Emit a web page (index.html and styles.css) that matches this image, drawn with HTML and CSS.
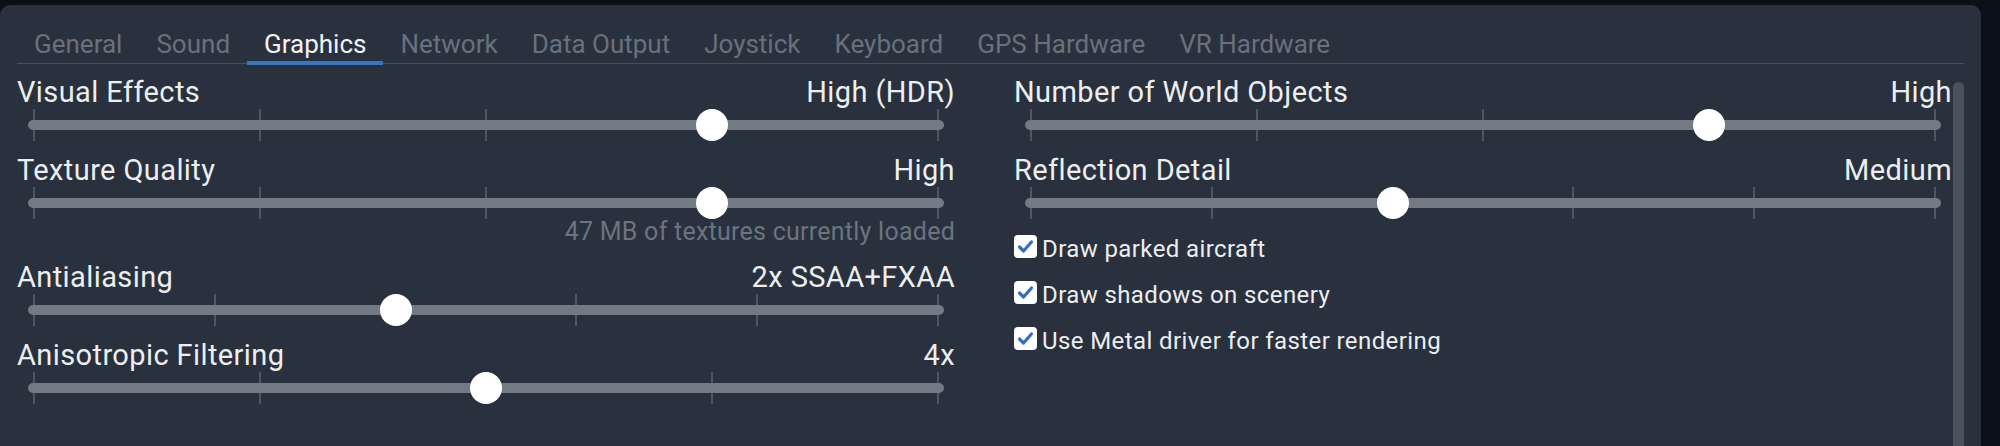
FILE: index.html
```html
<!DOCTYPE html>
<html lang="en">
<head>
<meta charset="utf-8">
<title>Settings – Graphics</title>
<link rel="stylesheet" href="styles.css">
</head>
<body>
<div class="panel">
  <nav class="tabs">
    <span class="tab">General</span>
    <span class="tab">Sound</span>
    <span class="tab active">Graphics</span>
    <span class="tab">Network</span>
    <span class="tab">Data Output</span>
    <span class="tab">Joystick</span>
    <span class="tab">Keyboard</span>
    <span class="tab">GPS Hardware</span>
    <span class="tab">VR Hardware</span>
  </nav>
  <div class="content">
    <div class="columns">
      <div class="column">
        <div class="setting">
          <div class="head"><span>Visual Effects</span><span>High (HDR)</span></div>
          <div class="slider">
            <div class="ticks"><i></i><i></i><i></i><i></i><i></i></div>
            <div class="track"></div>
            <div class="knob" style="--pos:0.75"></div>
          </div>
        </div>
        <div class="setting">
          <div class="head"><span>Texture Quality</span><span>High</span></div>
          <div class="slider">
            <div class="ticks"><i></i><i></i><i></i><i></i><i></i></div>
            <div class="track"></div>
            <div class="knob" style="--pos:0.75"></div>
          </div>
          <div class="note">47 MB of textures currently loaded</div>
        </div>
        <div class="setting">
          <div class="head"><span>Antialiasing</span><span>2x SSAA+FXAA</span></div>
          <div class="slider">
            <div class="ticks"><i></i><i></i><i></i><i></i><i></i><i></i></div>
            <div class="track"></div>
            <div class="knob" style="--pos:0.4"></div>
          </div>
        </div>
        <div class="setting">
          <div class="head"><span>Anisotropic Filtering</span><span>4x</span></div>
          <div class="slider">
            <div class="ticks"><i></i><i></i><i></i><i></i><i></i></div>
            <div class="track"></div>
            <div class="knob" style="--pos:0.5"></div>
          </div>
        </div>
      </div>
      <div class="column">
        <div class="setting">
          <div class="head"><span>Number of World Objects</span><span>High</span></div>
          <div class="slider">
            <div class="ticks"><i></i><i></i><i></i><i></i><i></i></div>
            <div class="track"></div>
            <div class="knob" style="--pos:0.75"></div>
          </div>
        </div>
        <div class="setting">
          <div class="head"><span>Reflection Detail</span><span>Medium</span></div>
          <div class="slider">
            <div class="ticks"><i></i><i></i><i></i><i></i><i></i><i></i></div>
            <div class="track"></div>
            <div class="knob" style="--pos:0.4"></div>
          </div>
        </div>
        <div class="checks">
          <label class="check">
            <span class="box"><svg viewBox="0 0 23 23" width="23" height="23"><path d="M5.5 12 L9.5 16 L17.5 7" fill="none" stroke="#2f70c0" stroke-width="3.2" stroke-linecap="round" stroke-linejoin="round"/></svg></span>
            <span class="check-text">Draw parked aircraft</span>
          </label>
          <label class="check">
            <span class="box"><svg viewBox="0 0 23 23" width="23" height="23"><path d="M5.5 12 L9.5 16 L17.5 7" fill="none" stroke="#2f70c0" stroke-width="3.2" stroke-linecap="round" stroke-linejoin="round"/></svg></span>
            <span class="check-text">Draw shadows on scenery</span>
          </label>
          <label class="check">
            <span class="box"><svg viewBox="0 0 23 23" width="23" height="23"><path d="M5.5 12 L9.5 16 L17.5 7" fill="none" stroke="#2f70c0" stroke-width="3.2" stroke-linecap="round" stroke-linejoin="round"/></svg></span>
            <span class="check-text">Use Metal driver for faster rendering</span>
          </label>
        </div>
      </div>
    </div>
    <div class="scrollbar"></div>
  </div>
</div>
</body>
</html>
```
FILE: styles.css
```css
html, body {
  margin: 0;
  padding: 0;
  height: 100%;
}
body {
  background: #0b1019;
  overflow: hidden;
  font-family: Roboto, "Liberation Sans", sans-serif;
}
.panel {
  margin-top: 5px;
  width: 1981px;
  min-height: calc(100vh - 5px);
  box-sizing: border-box;
  background: #28313d;
  border-radius: 10px 10px 0 0;
  padding: 24px 17px 0 17px;
  display: flex;
  flex-direction: column;
}
.tabs {
  display: flex;
  border-bottom: 1px solid #48505d;
}
.tab {
  position: relative;
  padding: 0 17px 4px;
  font-size: 26px;
  line-height: 30px;
  color: #69717d;
}
.tab.active {
  color: #f2f3f5;
}
.tab.active::after {
  content: "";
  position: absolute;
  left: 0;
  right: 0;
  bottom: -2px;
  height: 4px;
  background: #3877c2;
}
.content {
  flex: 1;
  display: flex;
  align-items: stretch;
}
.columns {
  display: grid;
  grid-template-columns: 938px 938px;
  column-gap: 59px;
  align-items: start;
  padding-top: 9px;
}
.column {
  display: flex;
  flex-direction: column;
  gap: 10px;
}
.head {
  display: flex;
  justify-content: space-between;
  padding-top: 2px;
  font-size: 29px;
  line-height: 34px;
  letter-spacing: 0.4px;
  color: #eceef0;
}
.slider {
  position: relative;
  margin: 0 11px;
  height: 32px;
  display: grid;
}
.ticks, .track {
  grid-area: 1 / 1;
}
.ticks {
  display: flex;
  justify-content: space-between;
  padding: 0 5px;
}
.ticks i {
  display: block;
  width: 2px;
  height: 32px;
  background: #4f5764;
}
.track {
  align-self: center;
  height: 10px;
  border-radius: 5px;
  background: #737a84;
}
.knob {
  position: absolute;
  top: 0;
  left: calc(6px + var(--pos) * (100% - 12px));
  width: 32px;
  height: 32px;
  margin-left: -16px;
  border-radius: 50%;
  background: #ffffff;
}
.note {
  text-align: right;
  font-size: 25px;
  line-height: 26px;
  letter-spacing: 0.25px;
  color: #6c7480;
  padding-bottom: 3px;
}
.checks {
  display: flex;
  flex-direction: column;
  gap: 10px;
}
.check {
  display: flex;
  align-items: center;
  height: 36px;
  gap: 5px;
}
.box {
  width: 23px;
  height: 23px;
  border-radius: 4px;
  background: #ffffff;
  display: flex;
  margin-bottom: 1px;
}
.check-text {
  font-size: 24px;
  line-height: 30px;
  letter-spacing: 0.4px;
  color: #eceef0;
  padding-top: 4px;
}
.scrollbar {
  width: 11px;
  margin: 18px 0 0 1px;
  background: #4a525e;
  border-radius: 6px 6px 0 0;
}
```
